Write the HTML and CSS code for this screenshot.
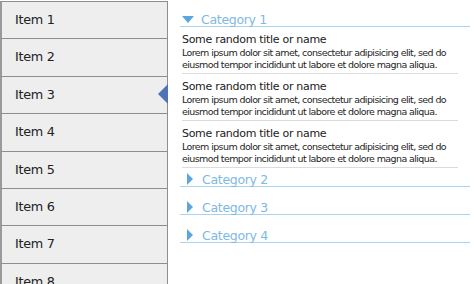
FILE: index.html
```html
<!DOCTYPE html>
<html lang="en">
<head>
    <meta charset="UTF-8">
    <title>Master Detail</title>
    <link rel="stylesheet" href="styles.css">
</head>
<body>
    <div class="layout">
        <!-- Item list -->
        <ul class="items">
            <li class="item">Item 1</li>
            <li class="item">Item 2</li>
            <li class="item active">Item 3</li>
            <li class="item">Item 4</li>
            <li class="item">Item 5</li>
            <li class="item">Item 6</li>
            <li class="item">Item 7</li>
            <li class="item">Item 8</li>
        </ul>

        <!-- Categories -->
        <div class="details">
            <div class="category open">
                <div class="cat-head"><span class="arrow"></span>Category 1</div>
                <div class="entry">
                    <div class="entry-title">Some random title or name</div>
                    <div class="entry-text">Lorem ipsum dolor sit amet, consectetur adipisicing elit, sed do<br>eiusmod tempor incididunt ut labore et dolore magna aliqua.</div>
                </div>
                <div class="entry">
                    <div class="entry-title">Some random title or name</div>
                    <div class="entry-text">Lorem ipsum dolor sit amet, consectetur adipisicing elit, sed do<br>eiusmod tempor incididunt ut labore et dolore magna aliqua.</div>
                </div>
                <div class="entry">
                    <div class="entry-title">Some random title or name</div>
                    <div class="entry-text">Lorem ipsum dolor sit amet, consectetur adipisicing elit, sed do<br>eiusmod tempor incididunt ut labore et dolore magna aliqua.</div>
                </div>
            </div>
            <div class="category">
                <div class="cat-head"><span class="arrow"></span>Category 2</div>
            </div>
            <div class="category">
                <div class="cat-head"><span class="arrow"></span>Category 3</div>
            </div>
            <div class="category">
                <div class="cat-head"><span class="arrow"></span>Category 4</div>
            </div>
        </div>
    </div>
</body>
</html>
```

FILE: styles.css
```css
/* Global */
body {
    margin: 0;
    font-family: "DejaVu Sans", Verdana, sans-serif;
    background: #fff;
    overflow: hidden;
}

.layout {
    display: flex;
    height: 284px;
    overflow: hidden;
}

/* Left list */
.items {
    list-style: none;
    margin: 0;
    padding: 1px 0 0;
    width: 168px;
    flex: none;
}
.item {
    position: relative;
    height: 36.4px;
    line-height: 36px;
    padding-left: 13px;
    font-size: 12.8px;
    color: #222;
    background: #eeeeee;
    border: 1px solid #8e8e8e;
    border-left: 2px solid #9a9a9a;
    border-bottom: none;
    letter-spacing: -0.3px;
}
.item.active::after {
    content: "";
    position: absolute;
    right: -1px;
    top: 7px;
    border-style: solid;
    border-width: 10px 10px 10px 0;
    border-color: transparent #4e74b6 transparent transparent;
}

/* Right side */
.details {
    flex: 1;
    padding: 12px 4px 0 12px;
}
.cat-head {
    display: flex;
    align-items: center;
    height: 14px;
    padding-left: 2px;
    font-size: 12.5px;
    color: #7db9e2;
    border-bottom: 1px solid #a9d3ee;
    letter-spacing: -0.3px;
    margin-bottom: 13px;
}
.arrow {
    width: 0;
    height: 0;
    margin-left: 5px;
    margin-right: 9px;
    border-style: solid;
    border-width: 6px 0 6px 6px;
    border-color: transparent transparent transparent #5ca6de;
}
.open .cat-head {
    margin-bottom: 4px;
}
.open .arrow {
    margin-left: 0;
    margin-right: 7px;
    border-width: 7px 6px 0 6px;
    border-color: #5ca6de transparent transparent transparent;
}

.entry {
    margin: 0 12px 4px 2px;
    padding: 2px 0;
    border-bottom: 1px solid #dcdcdc;
}
.entry-title {
    font-size: 11px;
    line-height: 14px;
    color: #1a1a1a;
    letter-spacing: -0.3px;
}
.entry-text {
    font-size: 9.5px;
    line-height: 12px;
    color: #1e1e1e;
    letter-spacing: -0.6px;
    white-space: nowrap;
}
```
